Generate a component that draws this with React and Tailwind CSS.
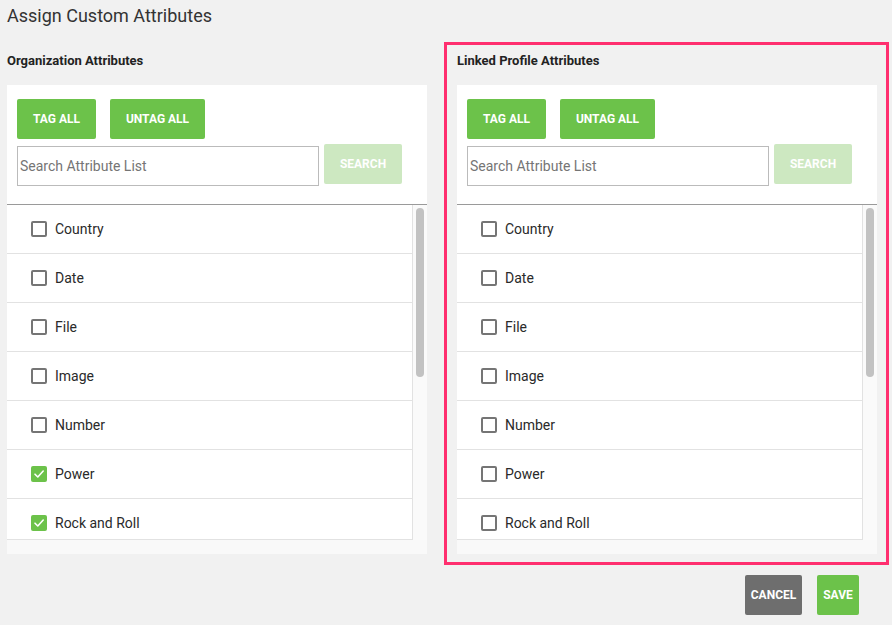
import React from "react";

const items = ["Country", "Date", "File", "Image", "Number", "Power", "Rock and Roll"];

function Checkbox({ checked }) {
  if (checked) {
    return (
      <span className="w-[16px] h-[16px] rounded-[2px] bg-[#6cc24a] flex items-center justify-center shrink-0">
        <svg width="12" height="12" viewBox="0 0 12 12" fill="none">
          <path d="M2 6.2 L4.8 9 L10.2 3" stroke="#fff" strokeWidth="1.6" strokeLinecap="round" strokeLinejoin="round" />
        </svg>
      </span>
    );
  }
  return <span className="w-[16px] h-[16px] rounded-[2px] border-2 border-[#757575] bg-white shrink-0" />;
}

function Card({ checkedSet }) {
  return (
    <div className="w-[420px] h-[469px] flex flex-col bg-white mt-[16px]">
      <div className="pl-[10px] pt-[14px] h-[119px] shrink-0">
        <div className="flex gap-[14px]">
          <button className="w-[79px] h-[40px] rounded-[2px] bg-[#6cc24a] text-white text-[12px] font-bold leading-none">TAG ALL</button>
          <button className="w-[95px] h-[40px] rounded-[2px] bg-[#6cc24a] text-white text-[12px] font-bold leading-none">UNTAG ALL</button>
        </div>
        <div className="flex gap-[5px] mt-[5px] items-start">
          <div className="w-[302px] h-[40px] mt-[2px] border border-[#bbbbbb] flex items-center pl-[2px] text-[14px] text-[#757575]">
            Search Attribute List
          </div>
          <button className="w-[78px] h-[40px] rounded-[2px] bg-[#cde8c1] text-white text-[12px] font-bold leading-none">SEARCH</button>
        </div>
      </div>
      <div className="flex h-[336px] border-t border-[#9a9a9a] shrink-0">
        <div className="w-[406px] overflow-hidden border-r border-b border-[#e2e2e2]">
          {items.map((it) => (
            <div key={it} className="h-[49px] shrink-0 border-b border-[#e2e2e2] flex items-center pl-[24px] gap-[8px] text-[14px] text-[#2a2a2a]">
              <Checkbox checked={checkedSet.includes(it)} />
              <span>{it}</span>
            </div>
          ))}
        </div>
        <div className="w-[14px] bg-[#fafafa] pt-[3px] pl-[3px]">
          <div className="w-[8px] h-[169px] rounded-full bg-[#c2c2c2]" />
        </div>
      </div>
      <div className="flex-1 bg-[#f9f9f9]" />
    </div>
  );
}

export default function App() {
  return (
    <div className="w-[892px] h-[625px] bg-[#f1f1f1] overflow-hidden" style={{ fontFamily: "Roboto, 'Liberation Sans', sans-serif" }}>
      <div className="pt-[4px] pl-[7px] text-[18px] leading-[24px] text-[#333333]">Assign Custom Attributes</div>
      <div className="flex mt-[14px]">
        <div className="ml-[7px] pt-[11px] w-[420px]">
          <div className="text-[13px] leading-[16px] font-bold text-[#222222]">Organization Attributes</div>
          <Card checkedSet={["Power", "Rock and Roll"]} />
        </div>
        <div className="ml-[17px] w-[445px] h-[523px] border-[3px] border-[#ff2f6f] pl-[10px] pt-[8px]">
          <div className="text-[13px] leading-[16px] font-bold text-[#222222]">Linked Profile Attributes</div>
          <Card checkedSet={[]} />
        </div>
      </div>
      <div className="flex justify-end gap-[15px] pr-[33px] mt-[10px]">
        <button className="w-[57px] h-[40px] rounded-[2px] bg-[#6e6e6e] text-white text-[12px] font-bold leading-none">CANCEL</button>
        <button className="w-[42px] h-[40px] rounded-[2px] bg-[#6cc24a] text-white text-[12px] font-bold leading-none">SAVE</button>
      </div>
    </div>
  );
}
